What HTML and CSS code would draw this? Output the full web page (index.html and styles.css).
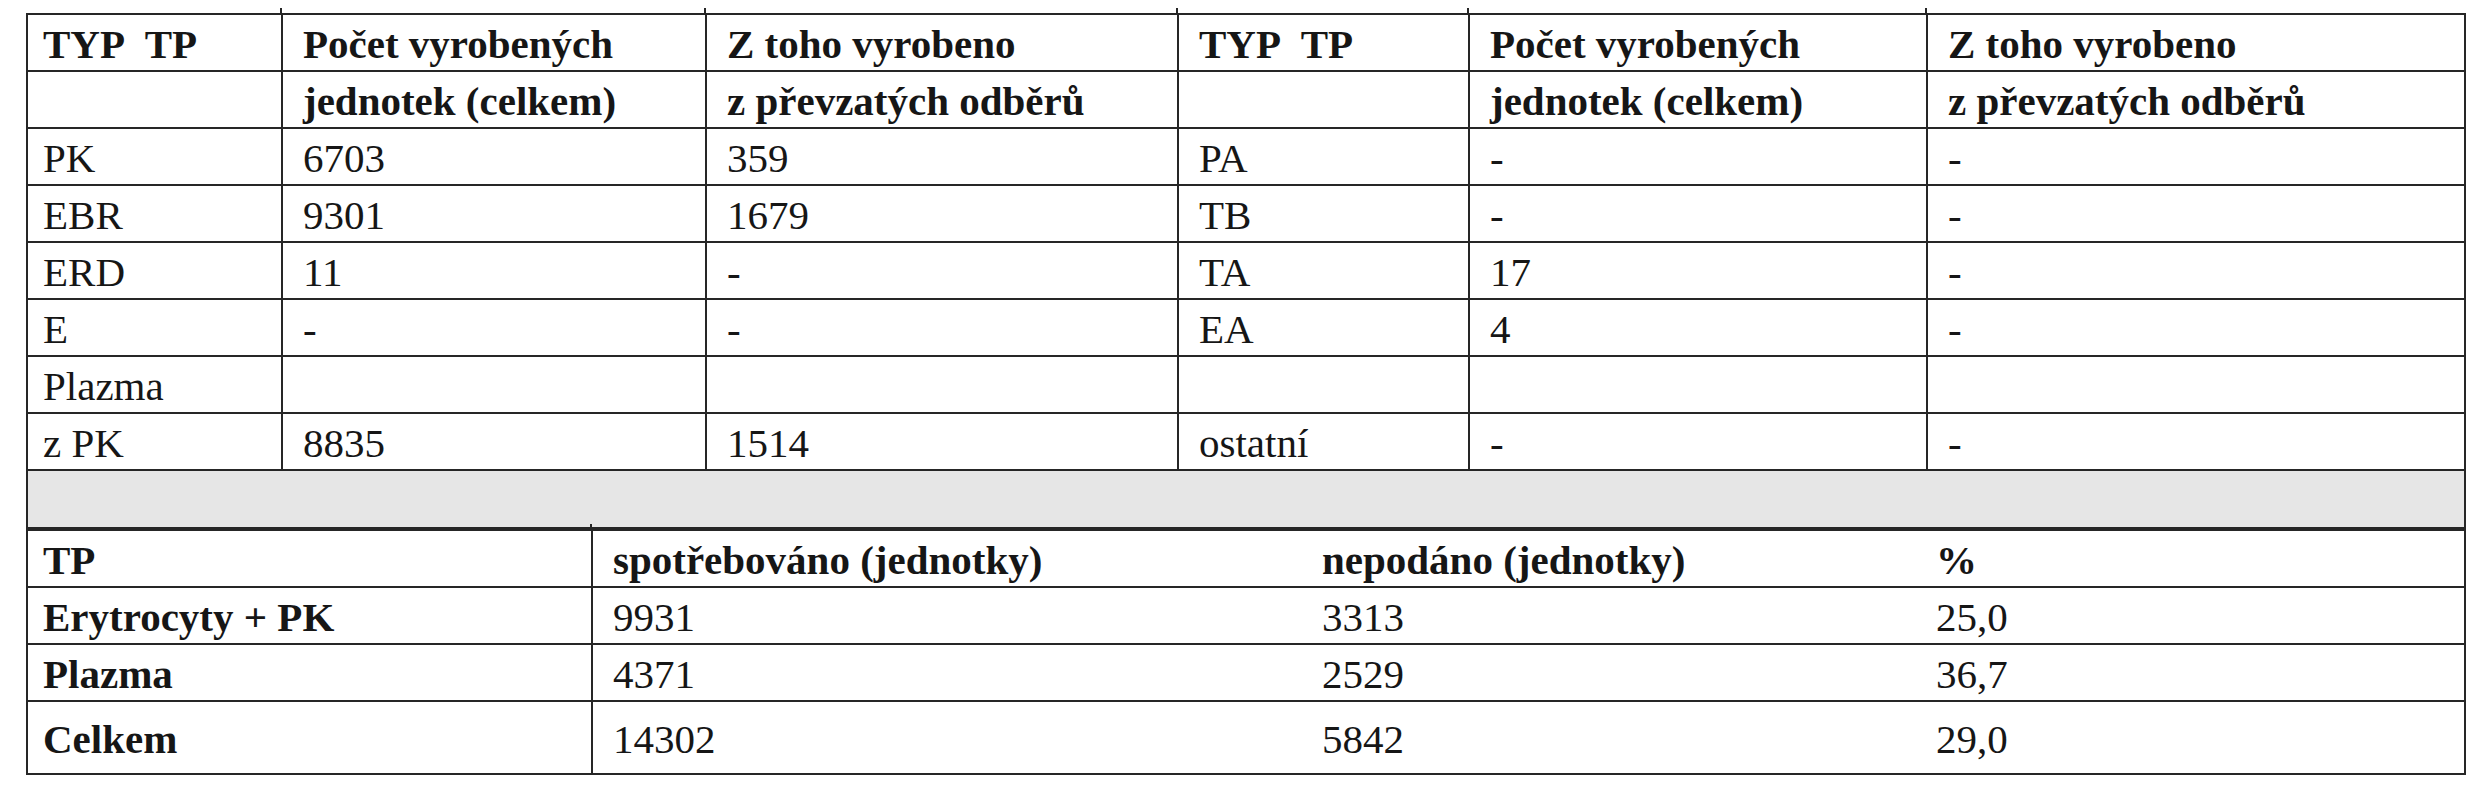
FILE: index.html
```html
<!DOCTYPE html>
<html>
<head>
<meta charset="utf-8">
<title>Tabulka TP</title>
<link rel="stylesheet" href="styles.css">
</head>
<body>
<table class="sheet">
  <colgroup>
    <col class="c1"><col class="c2"><col class="c3"><col class="c4"><col class="c5"><col class="c6">
  </colgroup>
  <tbody>
    <tr class="r-h1">
      <th class="pad-first tick">TYP&nbsp; TP</th>
      <th class="tick">Počet vyrobených</th>
      <th class="tick">Z toho vyrobeno</th>
      <th class="tick">TYP&nbsp; TP</th>
      <th class="tick">Počet vyrobených</th>
      <th>Z toho vyrobeno</th>
    </tr>
    <tr class="r-h2">
      <th class="pad-first"></th>
      <th>jednotek (celkem)</th>
      <th>z převzatých odběrů</th>
      <th></th>
      <th>jednotek (celkem)</th>
      <th>z převzatých odběrů</th>
    </tr>
    <tr><td class="pad-first">PK</td><td>6703</td><td>359</td><td>PA</td><td>-</td><td>-</td></tr>
    <tr><td class="pad-first">EBR</td><td>9301</td><td>1679</td><td>TB</td><td>-</td><td>-</td></tr>
    <tr><td class="pad-first">ERD</td><td>11</td><td>-</td><td>TA</td><td>17</td><td>-</td></tr>
    <tr><td class="pad-first">E</td><td>-</td><td>-</td><td>EA</td><td>4</td><td>-</td></tr>
    <tr><td class="pad-first">Plazma</td><td></td><td></td><td></td><td></td><td></td></tr>
    <tr><td class="pad-first">z PK</td><td>8835</td><td>1514</td><td>ostatní</td><td>-</td><td>-</td></tr>
    <tr class="band"><td colspan="6"></td></tr>
  </tbody>
</table>
<table class="sheet lower">
  <colgroup>
    <col class="d1"><col class="d2"><col class="d3"><col class="d4">
  </colgroup>
  <tbody>
    <tr class="r-b">
      <th class="pad-first split tick">TP</th>
      <th class="open">spotřebováno (jednotky)</th>
      <th class="open">nepodáno (jednotky)</th>
      <th class="open">%</th>
    </tr>
    <tr class="r-b">
      <th class="pad-first split">Erytrocyty + PK</th>
      <td class="open">9931</td><td class="open">3313</td><td class="open">25,0</td>
    </tr>
    <tr class="r-b">
      <th class="pad-first split">Plazma</th>
      <td class="open">4371</td><td class="open">2529</td><td class="open">36,7</td>
    </tr>
    <tr class="r-last">
      <th class="pad-first split">Celkem</th>
      <td class="open">14302</td><td class="open">5842</td><td class="open">29,0</td>
    </tr>
  </tbody>
</table>
</body>
</html>
```
FILE: styles.css
```css
html, body {
  margin: 0;
  padding: 0;
  background: #ffffff;
}

body {
  padding: 13px 0 0 26px;
}

.sheet {
  font-family: "Liberation Serif", "Times New Roman", serif;
  font-size: 41px;
  color: #161616;
  border-collapse: collapse;
  table-layout: fixed;
  width: 2440px;
  border: 2px solid #262626;
}

.sheet th,
.sheet td {
  font-family: "Liberation Serif", "Times New Roman", serif;
  text-align: left;
  vertical-align: middle;
  padding: 4px 0 0 20px;
  line-height: 1;
  white-space: nowrap;
  border: 2px solid #262626;
}

.sheet th {
  font-weight: bold;
}

.sheet .pad-first {
  padding-left: 15px;
}

.sheet .tick {
  position: relative;
}

.sheet .tick::after {
  content: "";
  position: absolute;
  top: -7px;
  right: -1px;
  width: 2px;
  height: 6px;
  background: #262626;
}

.c1 { width: 255px; }
.c2 { width: 424px; }
.c3 { width: 472px; }
.c4 { width: 291px; }
.c5 { width: 458px; }

.r-h1 { height: 59px; }
.r-h2 { height: 56px; }
.sheet tr { height: 57px; }

.band td {
  background: #e6e6e6;
  height: 56px;
  padding: 0;
}

.lower {
  border-top: none;
}

.d1 { width: 565px; }
.d2 { width: 710px; }
.d3 { width: 614px; }

.sheet .open {
  border-left: none;
  border-right: none;
}

.sheet td.open {
  font-weight: normal;
}

.sheet .split {
  border-right: 2px solid #262626;
}

.sheet .r-last {
  height: 73px;
}
```
